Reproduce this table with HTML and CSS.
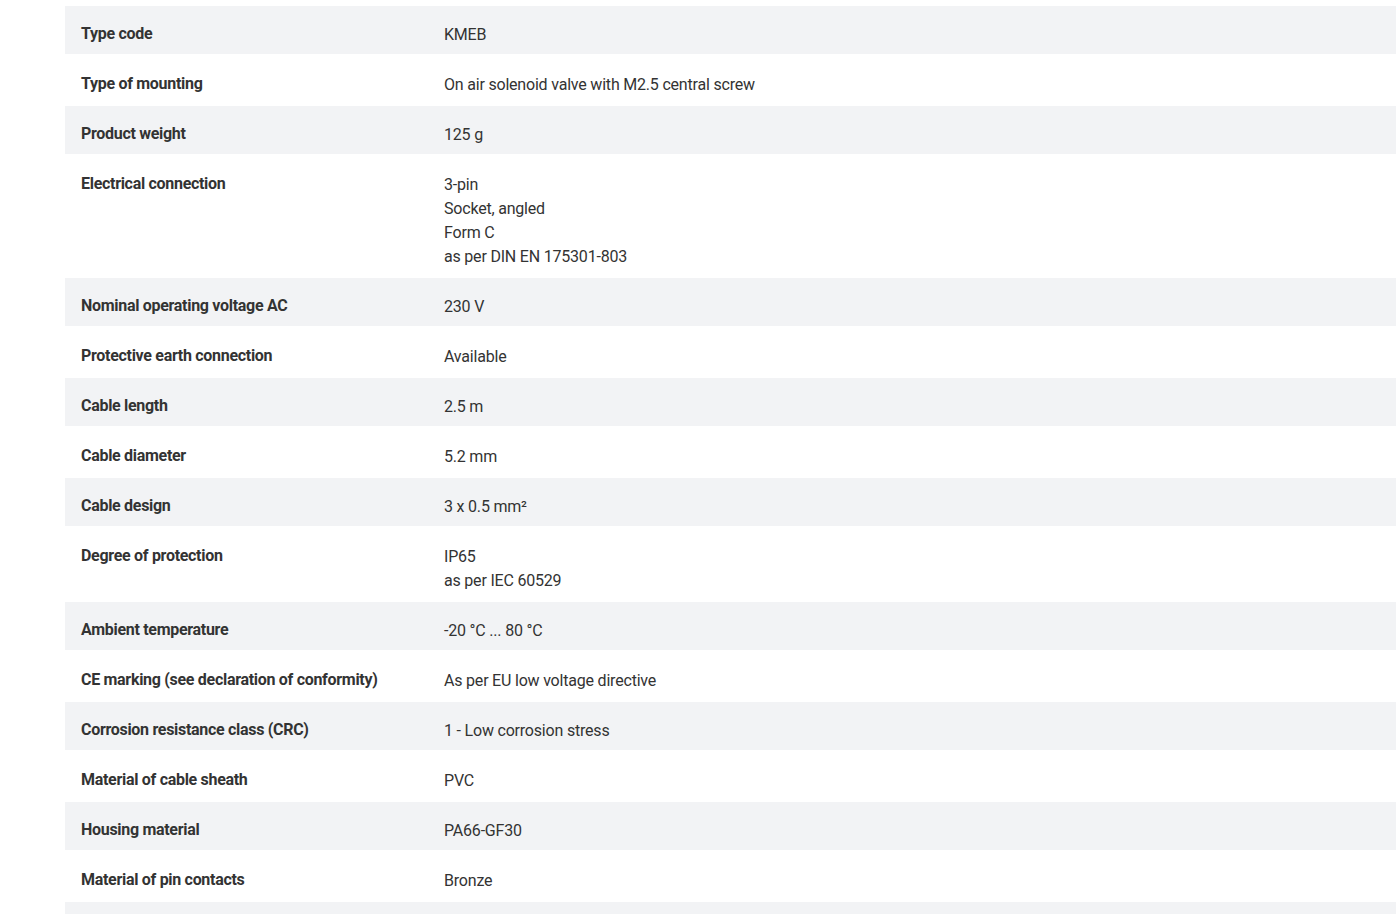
FILE: index.html
```html
<!DOCTYPE html>
<html lang="en">
<head>
<meta charset="utf-8">
<title>Technical data</title>
<link rel="stylesheet" href="styles.css">
</head>
<body>
<main class="page">
  <table class="specs">
    <tbody>
      <tr><th>Type code</th><td>KMEB</td></tr>
      <tr><th>Type of mounting</th><td>On air solenoid valve with M2.5 central screw</td></tr>
      <tr><th>Product weight</th><td>125 g</td></tr>
      <tr><th>Electrical connection</th><td><div>3-pin</div><div>Socket, angled</div><div>Form C</div><div>as per DIN EN 175301-803</div></td></tr>
      <tr><th>Nominal operating voltage AC</th><td>230 V</td></tr>
      <tr><th>Protective earth connection</th><td>Available</td></tr>
      <tr><th>Cable length</th><td>2.5 m</td></tr>
      <tr><th>Cable diameter</th><td>5.2 mm</td></tr>
      <tr><th>Cable design</th><td>3 x 0.5 mm²</td></tr>
      <tr><th>Degree of protection</th><td><div>IP65</div><div>as per IEC 60529</div></td></tr>
      <tr><th>Ambient temperature</th><td>-20 °C ... 80 °C</td></tr>
      <tr><th>CE marking (see declaration of conformity)</th><td>As per EU low voltage directive</td></tr>
      <tr><th>Corrosion resistance class (CRC)</th><td>1 - Low corrosion stress</td></tr>
      <tr><th>Material of cable sheath</th><td>PVC</td></tr>
      <tr><th>Housing material</th><td>PA66-GF30</td></tr>
      <tr><th>Material of pin contacts</th><td>Bronze</td></tr>
      <tr class="spacer"><th></th><td></td></tr>
    </tbody>
  </table>
</main>
</body>
</html>
```

FILE: styles.css
```css
html {
  overflow: hidden;
}

body {
  margin: 0;
  background: #fff;
  color: #333;
  font-family: Roboto, "Liberation Sans", sans-serif;
  font-size: 16px;
  line-height: 24px;
  letter-spacing: -0.2px;
}

.page {
  padding: 6px 0 0 65px;
}

.specs {
  width: 100%;
  border-collapse: collapse;
  table-layout: fixed;
}

.specs tr {
  border-bottom: 2px solid #fff;
}

.specs tr:nth-child(odd) {
  background: #f2f3f5;
}

.specs th,
.specs td {
  padding: 16px 16px 8px 16px;
  text-align: left;
  vertical-align: top;
}

.specs th {
  width: 331px;
  font-weight: 700;
  letter-spacing: -0.3px;
}

.specs td {
  padding-top: 17px;
  padding-bottom: 7px;
  font-weight: 400;
}

.specs .spacer th,
.specs .spacer td {
  height: 24px;
}
```
